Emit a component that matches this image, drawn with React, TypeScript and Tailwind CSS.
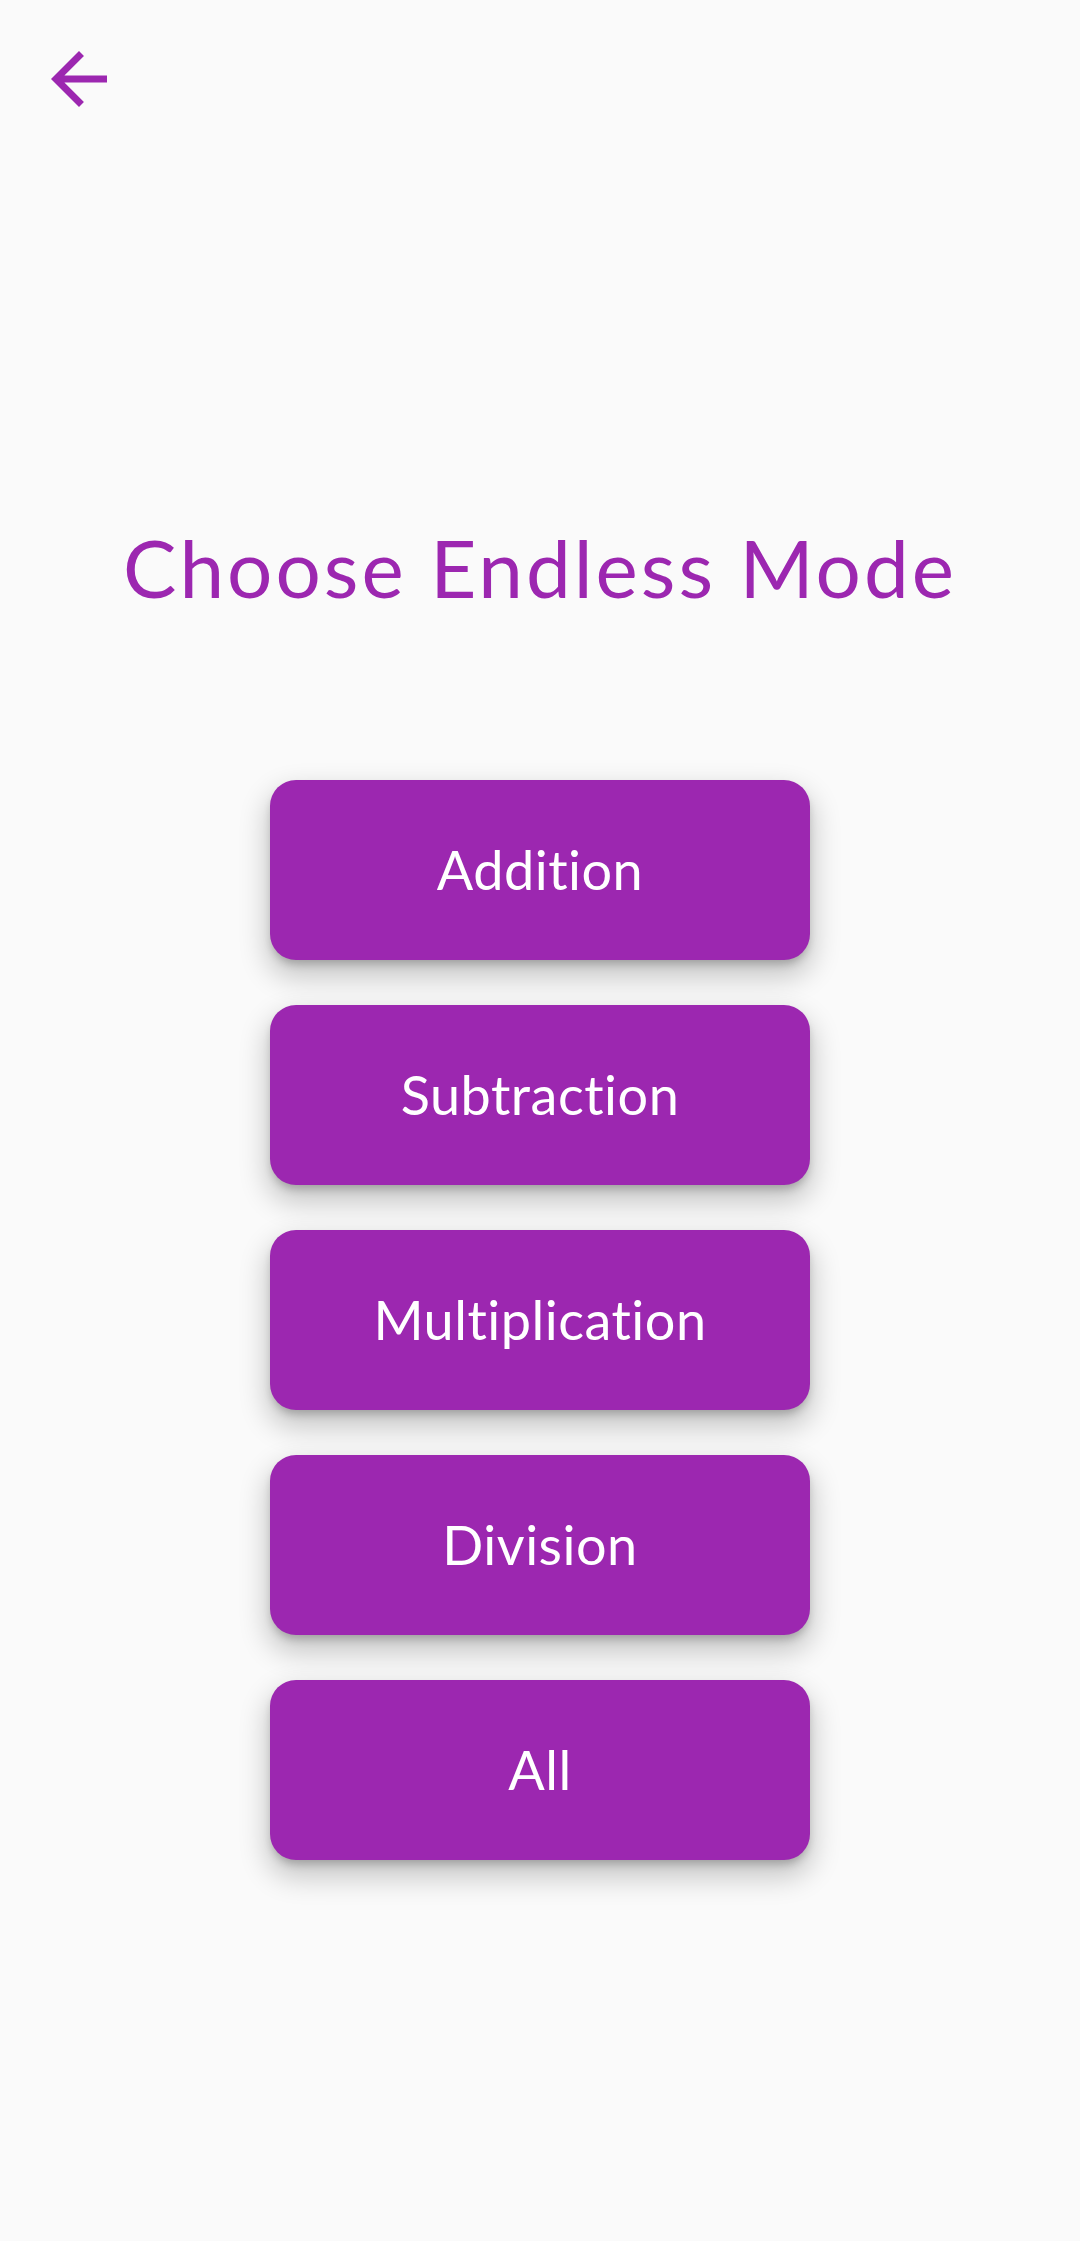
const modes = ["Addition", "Subtraction", "Multiplication", "Division", "All"];

function BackArrow() {
  return (
    <svg viewBox="0 0 24 24" className="w-[84px] h-[84px]" fill="#9c27b0">
      <path d="M20 11H7.83l5.59-5.59L12 4l-8 8 8 8 1.41-1.41L7.83 13H20v-2z" />
    </svg>
  );
}

function ModeButton({ label }: { label: string }) {
  return (
    <button className="w-full h-[180px] rounded-[26px] bg-[#9c27b0] text-white text-[54px] leading-none tracking-[0.5px] flex items-center justify-center shadow-[0_6px_8px_-2px_rgba(0,0,0,0.22),0_14px_28px_4px_rgba(0,0,0,0.2)]">
      {label}
    </button>
  );
}

export default function App() {
  return (
    <div
      className="min-h-screen bg-[#fafafa] flex flex-col items-center"
      style={{ fontFamily: "Lato, 'Noto Sans', sans-serif" }}
    >
      <div className="w-full pl-[37px] pt-[37px]">
        <button className="block">
          <BackArrow />
        </button>
      </div>

      <h1 className="mt-[406px] text-[80px] leading-none text-[#9c27b0] tracking-[3px]">
        Choose Endless Mode
      </h1>

      <div className="mt-[173px] w-[540px] flex flex-col gap-[45px]">
        {modes.map((m) => (
          <ModeButton key={m} label={m} />
        ))}
      </div>
    </div>
  );
}
